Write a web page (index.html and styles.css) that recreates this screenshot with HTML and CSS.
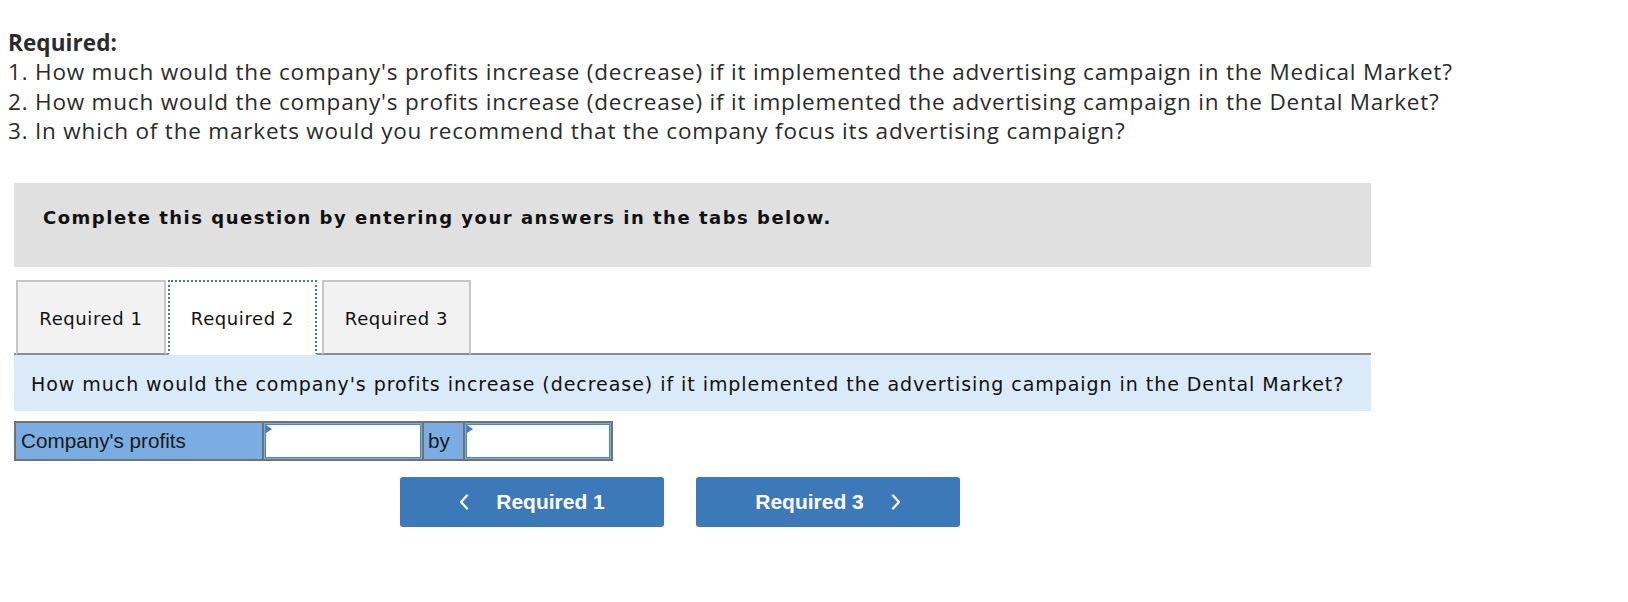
FILE: index.html
```html
<!DOCTYPE html>
<html lang="en">
<head>
<meta charset="utf-8">
<title>Required</title>
<link rel="stylesheet" href="styles.css">
</head>
<body>
<div class="intro">
  <div class="intro-title">Required:</div>
  <div class="intro-line">1. How much would the company's profits increase (decrease) if it implemented the advertising campaign in the Medical Market?</div>
  <div class="intro-line">2. How much would the company's profits increase (decrease) if it implemented the advertising campaign in the Dental Market?</div>
  <div class="intro-line">3. In which of the markets would you recommend that the company focus its advertising campaign?</div>
</div>

<div class="panel">
  <div class="instructions">Complete this question by entering your answers in the tabs below.</div>

  <div class="tabs">
    <div class="tab">Required 1</div>
    <div class="tab tab-active">Required 2</div>
    <div class="tab">Required 3</div>
  </div>

  <div class="question">How much would the company's profits increase (decrease) if it implemented the advertising campaign in the Dental Market?</div>

  <div class="answer-row">
    <div class="cell cell-label">Company's profits</div>
    <div class="cell cell-input cell-input-wide"><input class="answer-input" type="text" aria-label="increase or decrease"></div>
    <div class="cell cell-by">by</div>
    <div class="cell cell-input cell-input-narrow"><input class="answer-input" type="text" aria-label="amount"></div>
  </div>

  <div class="nav">
    <button class="nav-btn" type="button">
      <svg class="chev" width="10" height="16" viewBox="0 0 10 16" aria-hidden="true"><path d="M8 1.5 L2 8 L8 14.5" fill="none" stroke="#ffffff" stroke-width="2.2" stroke-linecap="round" stroke-linejoin="round"/></svg>
      <span class="nav-text">Required 1</span>
    </button>
    <button class="nav-btn" type="button">
      <span class="nav-text">Required 3</span>
      <svg class="chev" width="10" height="16" viewBox="0 0 10 16" aria-hidden="true"><path d="M2 1.5 L8 8 L2 14.5" fill="none" stroke="#ffffff" stroke-width="2.2" stroke-linecap="round" stroke-linejoin="round"/></svg>
    </button>
  </div>
</div>
</body>
</html>
```

FILE: styles.css
```css
html, body {
  background: #ffffff;
}

body {
  margin: 8px;
  font-family: "Open Sans", "Lato", sans-serif;
  color: #2b2b2b;
}

.intro {
  padding-top: 20px;
  font-size: 22.5px;
  line-height: 29.3px;
  letter-spacing: 0.8px;
}

.intro-title {
  font-weight: 700;
  letter-spacing: 0.1px;
}

.panel {
  margin: 38px 0 0 6px;
  width: 1357px;
}

.instructions {
  background: #e0e0e0;
  height: 84px;
  box-sizing: border-box;
  padding: 24px 0 0 29px;
  font-family: "DejaVu Sans", "Verdana", sans-serif;
  font-weight: 700;
  font-size: 18px;
  line-height: 22px;
  letter-spacing: 1.5px;
  color: #111111;
}

.tabs {
  display: flex;
  margin-top: 13px;
  padding-left: 2px;
  border-bottom: 2px solid #8c8c8c;
  height: 73px;
}

.tab {
  box-sizing: border-box;
  width: 150px;
  margin-bottom: -2px;
  height: 75px;
  padding-top: 2px;
  border: 2px solid #c6c6c6;
  border-bottom: 2px solid #8c8c8c;
  background: #f2f2f2;
  display: flex;
  align-items: center;
  justify-content: center;
  font-family: "DejaVu Sans", "Verdana", sans-serif;
  font-size: 18px;
  letter-spacing: 0.6px;
  color: #111111;
}

.tab + .tab {
  margin-left: 2px;
}

.tab-active {
  width: 149px;
  background: #ffffff;
  border: 2px dotted #4677bb;
  border-bottom: 2px solid #ffffff;
}

.tab-active + .tab {
  margin-left: 5px;
  width: 149px;
}

.question {
  background: #dbeaf8;
  height: 56px;
  display: flex;
  align-items: center;
  padding-left: 17px;
  padding-top: 1px;
  box-sizing: border-box;
  font-family: "DejaVu Sans", "Verdana", sans-serif;
  font-size: 19px;
  letter-spacing: 0.95px;
  color: #111111;
}

.answer-row {
  display: flex;
  gap: 2px;
  margin-top: 10px;
  width: fit-content;
  padding: 2px;
  background: #727272;
  height: 36px;
}

.cell {
  background: #7aaee2;
  height: 36px;
  box-sizing: border-box;
  display: flex;
  align-items: center;
  font-family: "Liberation Sans", "Arial", sans-serif;
  font-size: 20.7px;
  color: #1a1a1a;
}

.cell-label {
  width: 246px;
  padding-left: 5px;
}

.cell-by {
  width: 39px;
  padding-left: 4px;
}

.cell-input {
  position: relative;
  padding: 1px;
}

.cell-input-wide {
  width: 158px;
}

.cell-input-narrow {
  width: 146px;
}

.cell-input::before {
  content: "";
  position: absolute;
  left: 2px;
  top: 2px;
  width: 0;
  height: 0;
  border-top: 4px solid transparent;
  border-bottom: 4px solid transparent;
  border-left: 6px solid #3f7cc2;
}

.answer-input {
  appearance: none;
  -webkit-appearance: none;
  box-sizing: border-box;
  width: 100%;
  height: 100%;
  margin: 0;
  padding: 0 4px;
  border: 1px solid #4a85c6;
  background: #ffffff;
  border-radius: 0;
  outline: none;
}

.nav {
  display: flex;
  gap: 32px;
  margin: 16px 0 0 386px;
}

.nav-btn {
  width: 264px;
  height: 50px;
  border: none;
  border-radius: 3px;
  background: #3d78b8;
  color: #ffffff;
  display: flex;
  align-items: center;
  justify-content: center;
  gap: 27px;
  font-family: "Liberation Sans", "Arial", sans-serif;
  font-weight: 700;
  font-size: 21px;
  padding: 0;
  cursor: pointer;
}

.chev {
  display: block;
  flex: none;
}
```
